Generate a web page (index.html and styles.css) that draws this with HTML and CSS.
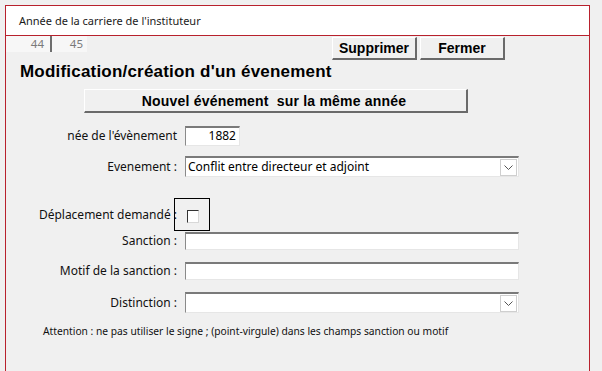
FILE: index.html
```html
<!DOCTYPE html>
<html>
<head>
  <title>Année de la carriere de l'instituteur</title>
  <meta charset="UTF-8">
  <link rel="stylesheet" href="styles.css">
</head>
<body>

  <div class="window">
    <div class="title-bar">Année de la carriere de l'instituteur</div>

    <!-- Years and action buttons -->
    <div class="toolbar">
      <div class="year-tabs">
        <span class="year-tab">44</span>
        <span class="year-tab">45</span>
      </div>
      <div class="actions">
        <button class="raised-button action-button">Supprimer</button>
        <button class="raised-button action-button">Fermer</button>
      </div>
    </div>

    <h2 class="form-title">Modification/création d'un évenement</h2>
    <button class="raised-button wide-button">Nouvel événement&nbsp; sur la même année</button>

    <!-- Event form -->
    <div class="event-form">
      <div class="form-row row-year">
        <label class="form-label">née de l'évènement</label>
        <div class="text-field year-field">1882</div>
      </div>

      <div class="form-row row-event">
        <label class="form-label">Evenement :</label>
        <div class="text-field combo-field">
          <span class="combo-value">Conflit entre directeur et adjoint</span>
          <span class="combo-arrow">
            <svg width="9" height="5" viewBox="0 0 9 5"><polyline points="0.5,0.5 4.5,4.5 8.5,0.5" fill="none" stroke="#555" stroke-width="1"/></svg>
          </span>
        </div>
      </div>

      <div class="form-row row-move">
        <label class="form-label">Déplacement demandé :</label>
        <div class="focus-box"><span class="check-box"></span></div>
      </div>

      <div class="form-row row-sanction">
        <label class="form-label">Sanction :</label>
        <div class="text-field wide-field"></div>
      </div>

      <div class="form-row row-motif">
        <label class="form-label">Motif de la sanction :</label>
        <div class="text-field wide-field"></div>
      </div>

      <div class="form-row row-distinction">
        <label class="form-label">Distinction :</label>
        <div class="text-field combo-field">
          <span class="combo-value"></span>
          <span class="combo-arrow">
            <svg width="9" height="5" viewBox="0 0 9 5"><polyline points="0.5,0.5 4.5,4.5 8.5,0.5" fill="none" stroke="#555" stroke-width="1"/></svg>
          </span>
        </div>
      </div>
    </div>

    <p class="form-note">Attention : ne pas utiliser le signe ; (point-virgule) dans les champs sanction ou motif</p>
  </div>

</body>
</html>
```

FILE: styles.css
```css
  html, body {
    height: 100%;
    margin: 0;
  }

  body {
    font-family: "Noto Sans", "Liberation Sans", sans-serif;
    font-size: 12px;
    background-color: #f0f0f0;
    color: #000;
    overflow: hidden;
  }

  .window {
    margin: 5px 0 0 5px;
    width: 583px;
    height: 365px;
    border: 1px solid #b8212d;
    border-bottom: none;
  }

  .title-bar {
    height: 29px;
    line-height: 29px;
    padding-left: 13px;
    background-color: #fff;
    border-bottom: 1px solid #b8212d;
    color: #1a1a1a;
    font-size: 11px;
  }

  /* Year tabs + buttons */
  .toolbar {
    display: flex;
    height: 24px;
  }

  .year-tabs {
    display: flex;
    height: 16px;
    background-color: #f7f7f7;
  }

  .year-tab {
    height: 16px;
    line-height: 16px;
    text-align: right;
    color: #7a7a7a;
    font-size: 11.5px;
  }

  .year-tab:first-child {
    width: 38px;
    padding-right: 6px;
    border-right: 2px solid #6e6e6e;
  }

  .year-tab:last-child {
    width: 31px;
    padding-right: 4px;
  }

  .actions {
    display: flex;
    gap: 3px;
    margin-left: 245px;
    padding-top: 1px;
  }

  .raised-button {
    box-sizing: border-box;
    margin: 0;
    padding: 0;
    background-color: #f0f0f0;
    border-style: solid;
    border-width: 1px 2px 2px 1px;
    border-color: #fff #6a6a6a #6a6a6a #fff;
    font-family: "Liberation Sans", Arial, sans-serif;
    font-weight: bold;
    font-size: 14px;
    color: #000;
  }

  .action-button {
    width: 85px;
    height: 23px;
  }

  .form-title {
    margin: 2px 0 0 0;
    padding-left: 14px;
    height: 20px;
    line-height: 20px;
    font-family: "Liberation Sans", Arial, sans-serif;
    font-size: 17px;
    letter-spacing: 0.2px;
    font-weight: bold;
  }

  .wide-button {
    display: block;
    width: 384px;
    height: 24px;
    margin: 7px 0 0 78px;
    padding-right: 3px;
    letter-spacing: 0.2px;
  }

  /* Form rows */
  .event-form {
    display: flex;
    flex-direction: column;
  }

  .form-row {
    display: flex;
    align-items: center;
  }

  .form-label {
    width: 171px;
    margin-right: 8px;
    text-align: right;
    line-height: 16px;
    color: #111;
  }

  .row-year { margin-top: 13px; height: 20px; }
  .row-event { margin-top: 10px; height: 21px; }
  .row-move { margin-top: 21px; height: 33px; }
  .row-sanction { margin-top: 1px; height: 18px; }
  .row-motif { margin-top: 12px; height: 18px; }
  .row-distinction { margin-top: 12px; height: 21px; }

  .text-field {
    box-sizing: border-box;
    height: 100%;
    background-color: #fff;
    border-style: solid;
    border-width: 2px 1px 1px 1px;
    border-color: #7a7a7a #e6e6e6 #e6e6e6 #8a8a8a;
  }

  .year-field {
    width: 55px;
    padding-right: 3px;
    text-align: right;
    line-height: 16px;
  }

  .wide-field {
    width: 334px;
  }

  .combo-field {
    display: flex;
    align-items: center;
    width: 334px;
    padding: 0 1px 0 2px;
  }

  .combo-value {
    flex: 1;
    line-height: 16px;
  }

  .combo-arrow {
    display: flex;
    align-items: center;
    justify-content: center;
    box-sizing: border-box;
    width: 17px;
    height: 17px;
    border: 1px solid #cfcfcf;
    background-color: #fff;
  }

  .focus-box {
    box-sizing: border-box;
    width: 36px;
    height: 33px;
    margin-left: -11px;
    padding: 11px 0 0 12px;
    border: 1px solid #000;
  }

  .check-box {
    display: block;
    box-sizing: border-box;
    width: 12px;
    height: 13px;
    background-color: #fff;
    border-style: solid;
    border-width: 1px;
    border-color: #333 #d8d8d8 #d8d8d8 #333;
  }

  .form-note {
    margin: 11px 0 0 37px;
    font-size: 10.25px;
    line-height: 14px;
    color: #111;
  }
```
